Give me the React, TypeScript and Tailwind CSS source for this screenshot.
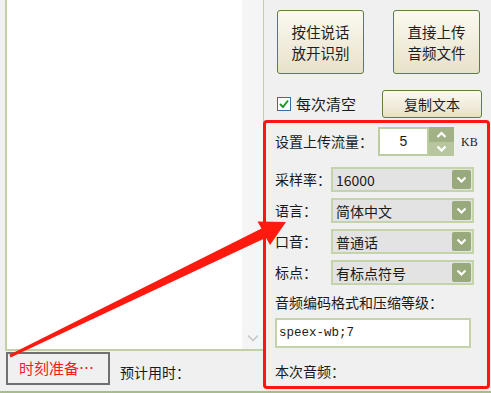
import React from "react";

const cjk = { fontFamily: '"Noto Sans CJK SC", "Noto Sans", sans-serif' };

const Chevron = ({ up = false }: { up?: boolean }) => (
  <svg width="11" height="7" viewBox="0 0 11 7">
    <path
      d={up ? "M1.5 6 L5.5 2 L9.5 6" : "M1.5 1.5 L5.5 5.5 L9.5 1.5"}
      fill="none"
      stroke="white"
      strokeWidth="2.2"
    />
  </svg>
);

const BigButton = ({ top, bottom }: { top: string; bottom: string }) => (
  <button className="w-[87px] h-[64px] rounded-[3px] border border-[#5f7f3f] bg-gradient-to-b from-[#fbf9f1] to-[#e8e1ca] flex flex-col items-center justify-center text-[14.5px] text-[#1e1e1e]">
    <div className="h-[21px] leading-[21px]">{top}</div>
    <div className="h-[21px] leading-[21px]">{bottom}</div>
  </button>
);

const Select = ({ label, value }: { label: string; value: string }) => (
  <div className="flex items-center h-[25px]">
    <span className="w-[56px] text-[14px] text-[#1a1a1a]">{label}</span>
    <div className="w-[143px] h-[25px] border-2 border-[#c3d3aa] bg-[#e3e3e3] flex items-center justify-between pl-[3px] pr-[1px]">
      <span className="text-[14px] text-[#1a1a1a] leading-none">{value}</span>
      <div className="w-[19px] h-[19px] rounded-[2px] bg-[#98a97c] flex items-center justify-center">
        <Chevron />
      </div>
    </div>
  </div>
);

export default function App() {
  return (
    <div
      className="relative w-[491px] h-[393px] bg-[#f0f0f0] border-b-2 border-[#a9bd8c] flex overflow-hidden"
      style={cjk}
    >
      {/* left column */}
      <div className="w-[264px] flex flex-col">
        <div className="ml-[5px] w-[259px] h-[351px] border-l-2 border-r border-b-2 border-[#c3d0a6] flex">
          <div className="flex-1 bg-white" />
          <div className="w-[21px] bg-[#f5f5f5] flex flex-col justify-end items-center pb-[7px]">
            <svg width="12" height="8" viewBox="0 0 12 8">
              <path d="M1 1.5 L6 6.5 L11 1.5" fill="none" stroke="#c8c8c8" strokeWidth="1.6" />
            </svg>
          </div>
        </div>
        <div className="flex items-center mt-[1px]">
          <div className="ml-[6px] w-[104px] h-[33px] border-2 border-[#707070] bg-[#f0f0f0] flex items-center pl-[11px] text-[15px] text-[#ff1a1a]">
            时刻准备…
          </div>
          <span className="ml-[10px] mt-[8px] text-[14px] text-[#1a1a1a]">预计用时：</span>
        </div>
      </div>

      {/* right column */}
      <div className="flex-1 flex flex-col">
        <div className="flex pt-[10px] pl-[13px] gap-[29px]">
          <BigButton top="按住说话" bottom="放开识别" />
          <BigButton top="直接上传" bottom="音频文件" />
        </div>
        <div className="flex items-center mt-[16px] pl-[13px] h-[28px]">
          <svg width="14" height="14" viewBox="0 0 14 14">
            <rect x="0.5" y="0.5" width="13" height="13" fill="white" stroke="#3d6aa0" />
            <path d="M3 7 L6 10 L11 3.5" fill="none" stroke="#1f9a2a" strokeWidth="2" />
          </svg>
          <span className="ml-[5px] text-[15px] text-[#1a1a1a]">每次清空</span>
          <button className="ml-[26px] w-[100px] h-[28px] rounded-[3px] border border-[#5f7f3f] bg-gradient-to-b from-[#fbf9f1] to-[#e8e1ca] text-[14px] text-[#1e1e1e]">
            复制文本
          </button>
        </div>

        <div className="ml-[-1px] mt-[2px] w-[227px] h-[269px] border-[3px] border-[#ff1414] rounded-[4px] pl-[9px] pt-[4px] flex flex-col">
          <div className="flex items-center h-[29px]">
            <span className="w-[103px] text-[14px] text-[#1a1a1a]">设置上传流量：</span>
            <div className="w-[51px] h-[29px] bg-white border-2 border-[#bccd9f] flex items-center justify-center text-[14px] text-[#1a1a1a]" style={{ fontFamily: '"Liberation Sans", sans-serif' }}>
              5
            </div>
            <div className="w-[25px] h-[29px] flex flex-col">
              <div className="flex-1 bg-[#a2b287] flex items-center justify-center">
                <Chevron up />
              </div>
              <div className="flex-1 bg-[#b8c6a0] flex items-center justify-center">
                <Chevron />
              </div>
            </div>
            <span className="ml-[7px] text-[12px] text-[#1a1a1a]" style={{ fontFamily: '"Liberation Serif", serif' }}>
              KB
            </span>
          </div>

          <div className="mt-[11px] flex flex-col gap-[6px]">
            <Select label="采样率：" value="16000" />
            <Select label="语言：" value="简体中文" />
            <Select label="口音：" value="普通话" />
            <Select label="标点：" value="有标点符号" />
          </div>

          <span className="mt-[7px] text-[14px] text-[#1a1a1a] leading-[20px]">音频编码格式和压缩等级：</span>
          <div className="mt-[6px] w-[196px] h-[30px] bg-white border-2 border-[#c3d3aa] flex items-center pl-[2px] text-[12.5px] text-[#1a1a1a]" style={{ fontFamily: '"Liberation Mono", monospace' }}>
            speex-wb;7
          </div>
          <span className="mt-[13px] text-[14px] text-[#1a1a1a] leading-[20px]">本次音频：</span>
        </div>
      </div>

      {/* red annotation arrow */}
      <svg className="absolute inset-0 pointer-events-none" width="491" height="393" viewBox="0 0 491 393">
        <polygon
          points="10.6,357.4 9.4,354.8 261.5,228.5 257.5,221.5 286,222 270,245 266,237.8"
          fill="#ff1a10"
        />
      </svg>
    </div>
  );
}
